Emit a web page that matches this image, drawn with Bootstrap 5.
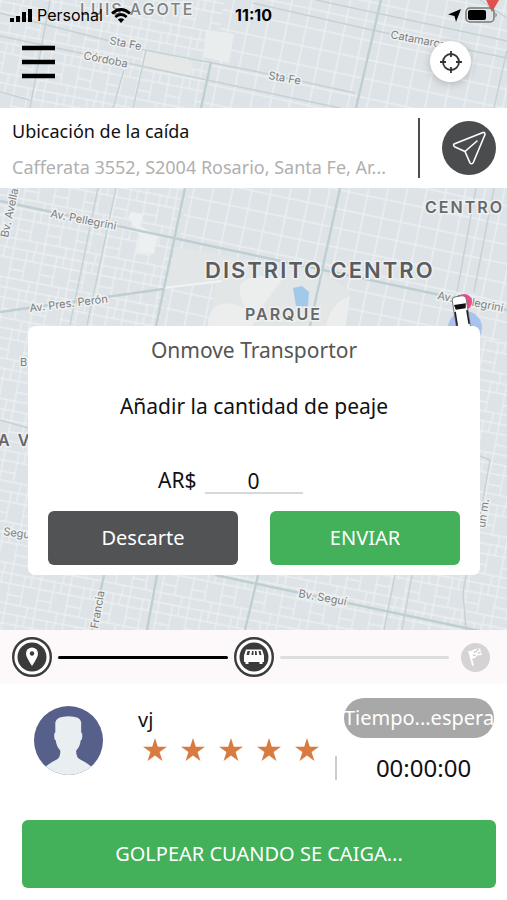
<!DOCTYPE html>
<html lang="es">
<head>
<meta charset="utf-8">
<meta name="viewport" content="width=device-width, initial-scale=1">
<title>Onmove Transportor</title>
<link href="https://cdn.jsdelivr.net/npm/bootstrap@5.3.0/dist/css/bootstrap.min.css" rel="stylesheet">
<style>
  body { font-family: "Noto Sans", sans-serif; color: #111; background: #fff; }
  svg { display: block; }
  .map-area { background: #dde3e6; isolation: isolate; }
  .map-canvas { position: absolute; inset: 0; width: 100%; height: 100%; z-index: -1; }
  .map-canvas text { font-family: Inter, sans-serif; fill: #7b7f82; stroke: #eef1f2; stroke-width: 3px; paint-order: stroke; font-size: 11px; }
  .map-canvas .district text { fill: #666869; font-weight: 600; font-size: 16px; letter-spacing: 2px; }
  .map-canvas .district .capital { font-size: 22px; fill: #5a5c5e; }
  .map-canvas .district .faded { fill: #808384; font-weight: 500; }
  .status-bar { height: 30px; font: 16px/30px Inter, sans-serif; padding: 0 9px; }
  .status-side { flex: 1 1 0; }
  .tool-row { height: 78px; padding: 11px 36px 0 22px; }
  .plain-btn { border: 0; background: none; padding: 0; }
  .locate-btn { width: 41px; height: 41px; background: #fff; box-shadow: 0 2px 8px #0003; }
  .address-bar { height: 80px; background: #fff; padding: 0 11px 0 12px; }
  .address-title { font-size: 18px; line-height: 24px; margin-top: 2px; }
  .address-text { font-size: 18px; line-height: 24px; color: #b0b0b0; margin-top: 12px; }
  .address-rule { width: 2px; height: 60px; background: #4c4c4c; }
  .nav-btn { width: 54px; height: 54px; background: #4a4c4d; margin-left: 22px; }
  .toll-card { margin: 138px 27px 55px 28px; padding: 8px 20px 10px; border: 0; border-radius: 7px; }
  .toll-head { font-size: 21px; line-height: 32px; color: #555; }
  .toll-title { font-size: 21px; line-height: 32px; margin-top: 24px; }
  .toll-amount { font-size: 21px; line-height: 32px; margin: 42px 0 15px; padding-left: 110px; }
  .toll-amount input { width: 98px; height: 24px; margin-top: 4px; border: 0; border-bottom: 2px solid #d8d8d8; padding: 0; text-align: center; color: #111; background: none; border-radius: 0; }
  .action-btn { --bs-btn-color: #fff; --bs-btn-hover-color: #fff; --bs-btn-border-radius: 6px; border: 0; font-size: 20px; line-height: 30px; padding: 12px 0; }
  .action-green { background: #43b05a; }
  .action-dark { background: #515355; }
  .toll-actions { gap: 32px; }
  .progress-strip { height: 54px; background: #fdf9fa; padding: 0 17px 0 12px; }
  .leg { height: 3px; border-radius: 2px; margin: 0 6px; }
  .leg-next { margin: 0 12px 0 6px; background: #ddd; }
  .driver-row { padding: 14px 13px 38px 34px; }
  .driver-info { padding: 8px 0 0 35px; }
  .driver-name { font-size: 20px; line-height: 28px; }
  .star-row { gap: 14px; padding: 4px 0 0 5px; }
  .wait-box { width: 159px; }
  .wait-pill { width: 150px; background: #a8a8a8; color: #fff; border-radius: 20px; font-size: 20px; line-height: 40px; white-space: nowrap; }
  .wait-rule { width: 2px; height: 24px; background: #ccc; }
  .wait-time { font-size: 24px; line-height: 28px; }
  .pickup-area { padding: 0 11px 13px 22px; }
  .pickup-btn { padding: 18px 0; line-height: 32px; }
</style>
<script src="https://cdn.jsdelivr.net/npm/bootstrap@5.3.0/dist/js/bootstrap.bundle.min.js"></script>
</head>
<body class="d-flex flex-column min-vh-100">

<main class="map-area position-relative">
  <svg class="map-canvas" viewBox="0 0 507 630" preserveAspectRatio="xMidYMid slice" role="img" aria-label="Mapa de Rosario">
    <defs>
      <pattern id="wide" width="19" height="19" patternUnits="userSpaceOnUse" patternTransform="rotate(12)"><path d="M0 1H19M1 0V19" stroke="#ebeff1" stroke-width="1.500"/></pattern>
      <pattern id="dense" width="30" height="40" patternUnits="userSpaceOnUse" patternTransform="rotate(11)"><path d="M0 1H30M0 11H30M0 22H15M0 31H30M1 0V40M15 0V31M23 31V40M22 0V11" stroke="#ecf0f2" stroke-width="1.300" fill="none"/></pattern>
    </defs>
    <rect width="507" height="630" fill="#dde3e6"/>
    <path d="M0 0H225L160 325V630H0Z" fill="url(#dense)"/>
    <path d="M225 0H507V340H160Z" fill="url(#wide)"/>
    <path d="M160 340H507V630H160Z" fill="url(#dense)"/>
    <path d="M146 51 193 62 190 76 142 67Z" fill="#e6e7e7"/>
    <path d="M206 30 234 34 229 63 203 57Z" fill="#eaeded"/>
    <path d="M131 212 144 214 139 225 158 236 154 254 136 252 140 236 128 217Z" fill="#edf0f0"/>
    <path d="M176 247 320 272 350 290 345 330H210L216 284 166 286Z" fill="#e3e6e7"/>
    <path d="M208 330C207 300 226 300 245 308 232 280 242 274 284 277L264 304 250 330ZM325 330C330 306 340 300 350 296L345 330Z" fill="#eceeee"/>
    <path d="M163 288 222 281" stroke="#f2f4f4" stroke-width="2"/>
    <path d="M293 288 302 286 309 292 308 307 296 306Z" fill="#a3c9e8"/>
    <g fill="none" stroke="#c5d2d5" stroke-width="1.400">
      <path d="M50 0 30 108M0 36 254 90 340 108M0 13 145 50 254 71 355 93M0 92 30 100M146 50 133 108M124 70 113 108M253 3 372 30 507 58M316 0 507 41M507 50 494 108M480 0 507 18"/>
      <path d="M98 188 70 325M116 188 87 325M476 188 457 292M494 188 474 292M395 575 384 630M412 575 402 630M466 575 463 593 466 630M480 456 490 460 475 545M0 420 28 428"/>
    </g>
    <g fill="none" stroke="#bfcfd1" stroke-width="2.400">
      <path d="M211 62 201 108M381 0 356 108M185 188 156 326M340 188 310 326M0 201 253 255 440 295 507 310M0 312 163 289M104 575 92 630M157 575 147 630M258 575 245 630M215 575 480 631"/>
    </g>
    <text transform="translate(109 44) rotate(11)">Sta Fe</text>
    <text transform="translate(83 59) rotate(11)">Córdoba</text>
    <text transform="translate(268 79) rotate(10)">Sta Fe</text>
    <text transform="translate(390 38) rotate(11)">Catamarca</text>
    <text transform="translate(8 238) rotate(-78)">Bv. Avellaneda</text>
    <text transform="translate(50 217) rotate(11)">Av. Pellegrini</text>
    <text transform="translate(30 312) rotate(-7)">Av. Pres. Perón</text>
    <text transform="translate(437 299) rotate(11)">Av. Pellegrini</text>
    <text transform="translate(20 366)">B</text>
    <text transform="translate(3 535) rotate(8)">Seguí</text>
    <text transform="translate(98 629) rotate(-80)">Francia</text>
    <text transform="translate(298 597) rotate(10)">Bv. Seguí</text>
    <text transform="translate(485 528) rotate(-82)">un m.</text>
    <g class="district">
      <text x="80" y="15" class="faded">LUIS AGOTE</text>
      <text x="425" y="213">CENTRO</text>
      <text x="205" y="278" class="capital">DISTRITO CENTRO</text>
      <text x="245" y="320">PARQUE</text>
      <text x="-2" y="446">A V</text>
    </g>
    <path d="M486 0H499L492 12Z" fill="#e2524c"/>
    <circle cx="465" cy="328" r="17" fill="#a9c2ee"/>
    <circle cx="464" cy="302" r="8" fill="#ec4b86"/>
    <g transform="rotate(-9 461 311)"><rect x="454" y="296" width="14" height="34" rx="4" fill="#fff" stroke="#777"/><path d="M455 304H467L466 309H456Z" fill="#111"/><path d="M455 311V325M467 311V325" stroke="#222" stroke-width="1.600"/></g>
  </svg>

  <div class="status-bar d-flex align-items-center text-black">
    <div class="status-side d-flex align-items-center">
      <svg width="24" height="14" viewBox="0 0 24 14" aria-hidden="true"><path d="M1 10h4v4H1zM7 8h4v6H7zM13 4h4v10h-4zM19 1h4v13h-4z"/></svg>
      <span class="ms-1">Personal</span>
      <svg class="ms-2" width="20" height="15" viewBox="0 0 20 15" aria-hidden="true"><g fill="none" stroke="#000" stroke-width="2.800"><path d="M1 5.500Q10-2.500 19 5.500"/><path d="M4.300 9Q10 4 15.700 9"/></g><path d="M10 15 6.800 11.500Q10 9 13.200 11.500Z"/></svg>
    </div>
    <span class="fw-bold">11:10</span>
    <div class="status-side d-flex align-items-center justify-content-end">
      <svg width="13" height="13" viewBox="0 0 13 13" aria-hidden="true"><path d="M13 0 8 13 6.500 7 0 5.500Z"/></svg>
      <svg class="ms-1" width="33" height="16" viewBox="0 0 33 16" aria-hidden="true"><rect x="1" y="1" width="28" height="14" rx="4" fill="none" stroke="#77797a" stroke-width="1.500"/><rect x="3" y="3" width="18" height="10" rx="2"/><path d="M30.500 5.500Q33 8 30.500 10.500Z" fill="#77797a"/></svg>
    </div>
  </div>

  <div class="tool-row d-flex justify-content-between align-items-start">
    <button type="button" class="plain-btn mt-1" aria-label="Menú"><svg width="33" height="36" viewBox="0 0 33 36"><path d="M0 3H33M0 17H33M0 31H33" stroke="#000" stroke-width="4.500"/></svg></button>
    <button type="button" class="plain-btn locate-btn rounded-circle d-flex align-items-center justify-content-center" aria-label="Mi ubicación"><svg width="22" height="22" viewBox="0 0 22 22" fill="none" stroke="#333" stroke-width="1.800"><circle cx="11" cy="11" r="8"/><path d="M11 0V6M11 16V22M0 11H6M16 11H22"/></svg></button>
  </div>

  <div class="address-bar d-flex align-items-center">
    <div class="flex-grow-1 text-truncate">
      <div class="address-title">Ubicación de la caída</div>
      <div class="address-text text-truncate">Cafferata 3552, S2004 Rosario, Santa Fe, Ar...</div>
    </div>
    <div class="address-rule flex-shrink-0"></div>
    <button type="button" class="plain-btn nav-btn rounded-circle flex-shrink-0 d-flex align-items-center justify-content-center" aria-label="Navegar"><svg width="34" height="34" viewBox="0 0 34 34" fill="none" stroke="#fff" stroke-width="1.600" stroke-linejoin="round" stroke-linecap="round"><path d="M31 1.500 2 13Q1 15 3 16L13 20.500 18 32Q20 34 21.500 31L33 3.500Q33 1 31 1.500ZM13 20.500 25 10"/></svg></button>
  </div>

  <form class="toll-card card text-center">
    <div class="toll-head">Onmove Transportor</div>
    <label class="toll-title" for="toll">Añadir la cantidad de peaje</label>
    <div class="toll-amount d-flex align-items-center">
      <label class="me-2" for="toll">AR$</label>
      <input id="toll" type="text" inputmode="numeric" value="0">
    </div>
    <div class="toll-actions d-flex">
      <button type="button" class="btn action-btn action-dark flex-fill w-50">Descarte</button>
      <button type="button" class="btn action-btn action-green flex-fill w-50">ENVIAR</button>
    </div>
  </form>
</main>

<div class="progress-strip d-flex align-items-center">
  <svg class="flex-shrink-0" width="40" height="40" viewBox="0 0 40 40" aria-hidden="true"><circle cx="20" cy="20" r="18.800" fill="#fff" stroke="#3b3b3b" stroke-width="2.400"/><circle cx="20" cy="20" r="14.500" fill="#3b3b3b"/><path d="M20 29Q14 20 14 16.500a6 6 0 0 1 12 0Q26 20 20 29Z" fill="#fff"/><circle cx="20" cy="16.500" r="2.200" fill="#3b3b3b"/></svg>
  <div class="leg flex-fill bg-black"></div>
  <svg class="flex-shrink-0" width="40" height="40" viewBox="0 0 40 40" aria-hidden="true"><circle cx="20" cy="20" r="18.800" fill="#fff" stroke="#3b3b3b" stroke-width="2.400"/><circle cx="20" cy="20" r="14.500" fill="#3b3b3b"/><path d="M12 12.500H28L30 18.500V25H28.500V27H25.500V25H14.500V27H11.500V25H10V18.500Z" fill="#fff"/><path d="M13.500 14 12.500 18H15L16 14ZM18 14 17.500 18H19.500V14ZM21 14V18H23L22.500 14ZM24.500 14 25.500 18H27.500L26.500 14Z" fill="#3b3b3b"/></svg>
  <div class="leg leg-next flex-fill"></div>
  <svg class="flex-shrink-0" width="29" height="29" viewBox="0 0 29 29" aria-hidden="true"><circle cx="14.500" cy="14.500" r="14.500" fill="#d5d3d4"/><path d="M8 8 12 22.500" stroke="#fff" stroke-width="1.800"/><path d="M8.500 8.500 12 7 14 6 19 5.500 21 12 16 12.500 14 15 10.500 16Z" fill="#fff"/><path d="M13 9 16 8.500M17 10 19.500 9.500M12 12.500 14.500 12M15.500 7 18 6.800" stroke="#cfcdce" stroke-width="1.400"/></svg>
</div>

<section class="driver-row d-flex">
  <svg class="flex-shrink-0 mt-2" width="69" height="69" viewBox="0 0 68 68" role="img" aria-label="Foto de vj"><defs><clipPath id="disc"><circle cx="34" cy="34" r="34"/></clipPath></defs><g clip-path="url(#disc)"><rect width="68" height="68" fill="#56608a"/><path d="M0 68 11 60Q16 56 22 53 26 51 26 44 22 40 21.500 34 19.500 33 20 27L21 26V16Q22 10 34 10 46 10 46.500 16V26L47.500 27Q48 33 46 34 45.500 40 41.500 44 41.500 51 46 53 52 56 57 60L68 68Z" fill="#e9eef0"/></g></svg>
  <div class="driver-info flex-grow-1">
    <div class="driver-name">vj</div>
    <div class="star-row d-flex" role="img" aria-label="5 estrellas">
      <svg width="24" height="24" viewBox="0 0 24 24" fill="#d97b40"><path id="star" d="M12 0 14.800 8.700H24L16.600 14.100 19.400 23 12 17.500 4.600 23 7.400 14.100 0 8.700H9.200Z"/></svg>
      <svg width="24" height="24" viewBox="0 0 24 24" fill="#d97b40"><use href="#star"/></svg>
      <svg width="24" height="24" viewBox="0 0 24 24" fill="#d97b40"><use href="#star"/></svg>
      <svg width="24" height="24" viewBox="0 0 24 24" fill="#d97b40"><use href="#star"/></svg>
      <svg width="24" height="24" viewBox="0 0 24 24" fill="#d97b40"><use href="#star"/></svg>
    </div>
  </div>
  <div class="wait-box flex-shrink-0">
    <div class="wait-pill ms-auto d-flex justify-content-center">Tiempo...espera</div>
    <div class="d-flex align-items-center mt-3">
      <div class="wait-rule"></div>
      <div class="wait-time flex-grow-1 text-center ps-3">00:00:00</div>
    </div>
  </div>
</section>

<div class="pickup-area">
  <button type="button" class="btn action-btn action-green pickup-btn w-100">GOLPEAR CUANDO SE CAIGA...</button>
</div>
</body>
</html>
